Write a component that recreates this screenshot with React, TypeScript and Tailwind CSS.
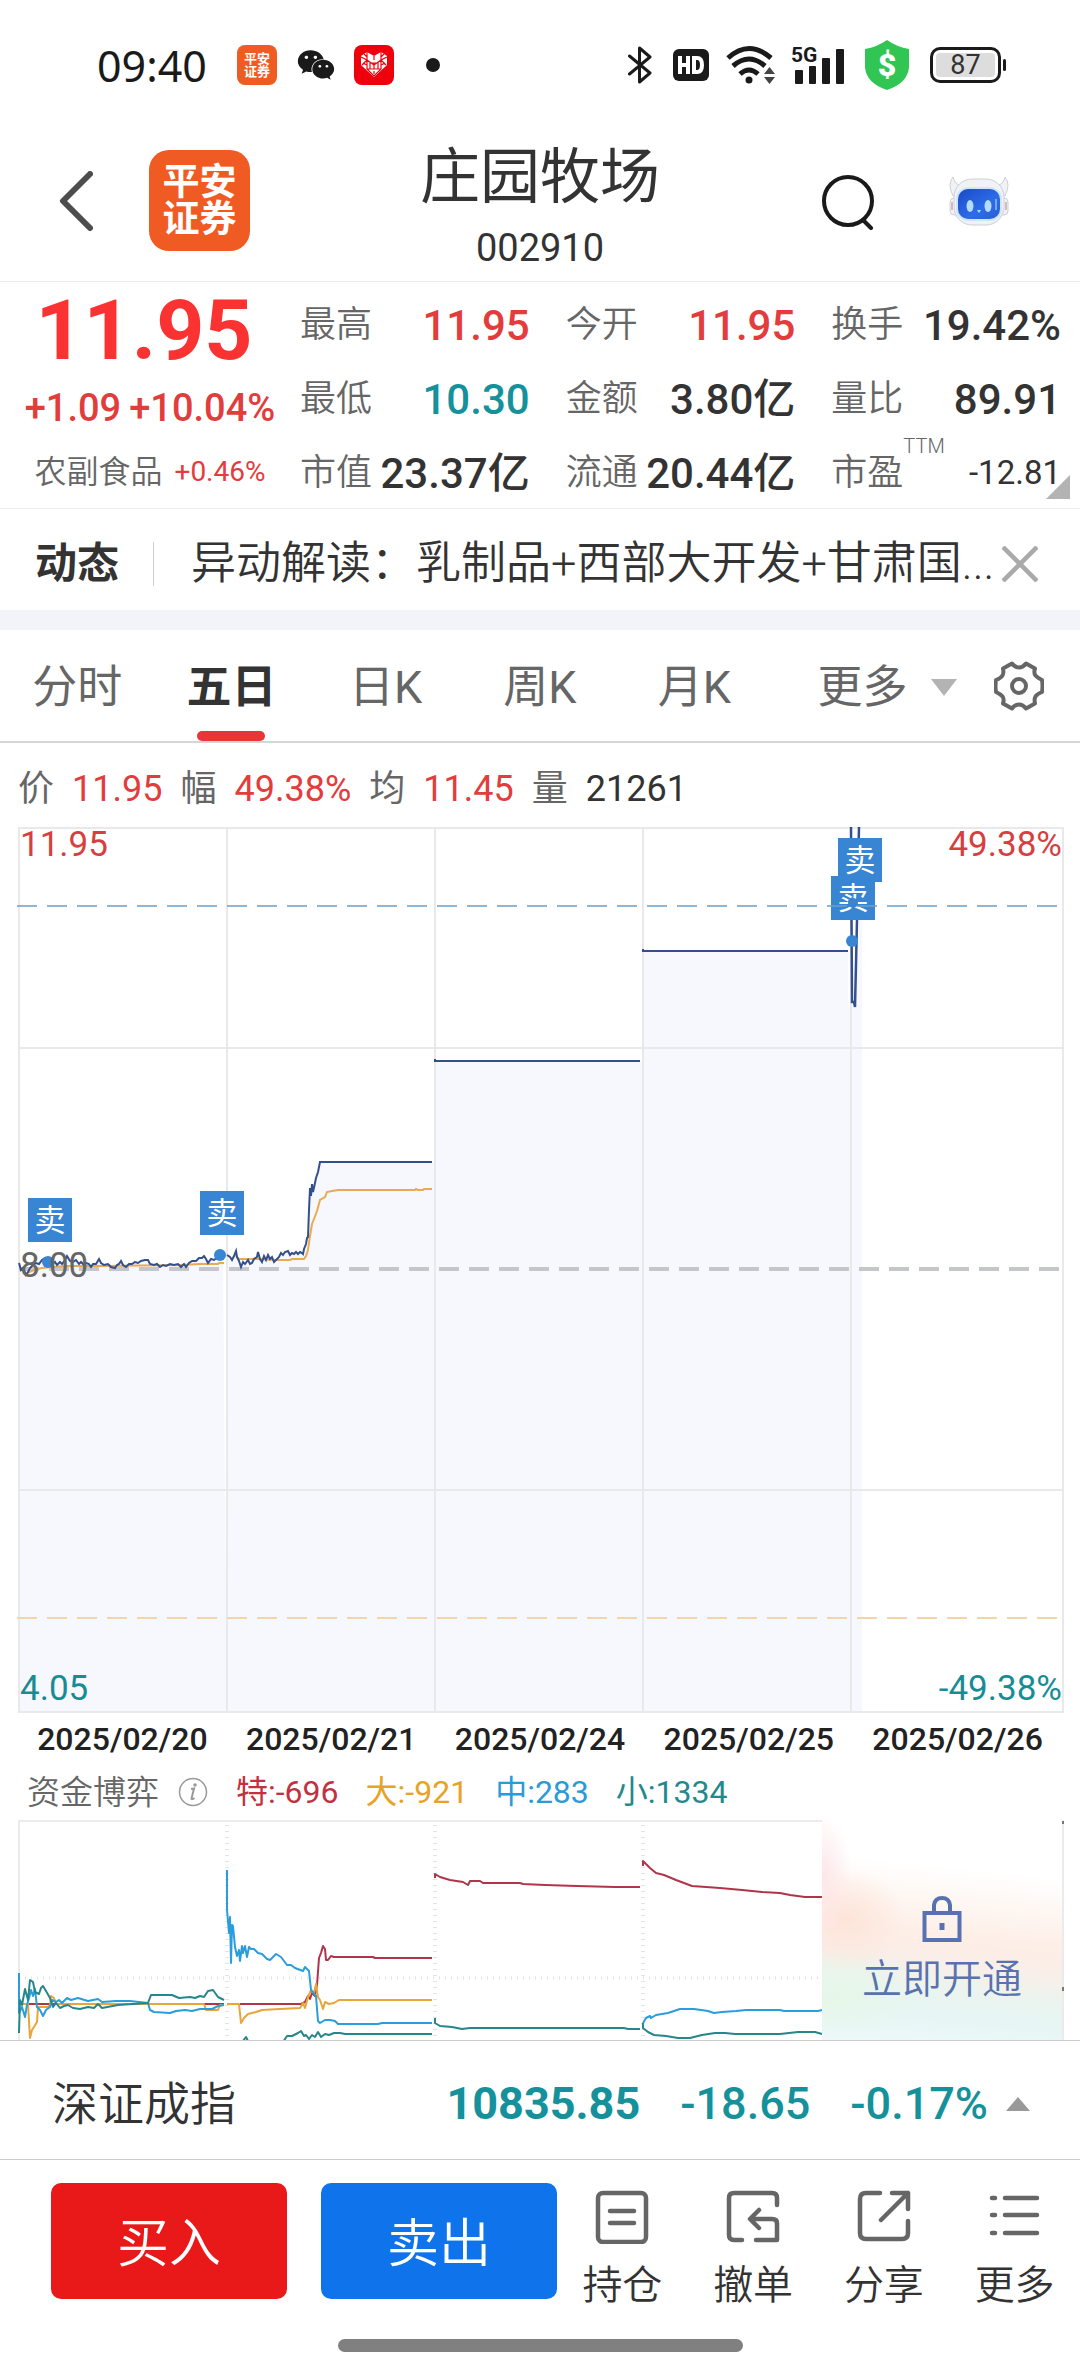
/**
 * App.tsx
 * 个股行情页：报价、五日分时图、资金博弈、底部交易栏
 */
import type { ReactNode } from 'react'
import { FaWeixin } from 'react-icons/fa'

const RED = 'text-[#e23c3c]'
const TEAL = 'text-[#14919a]'
const DARK = 'text-[#333333]'

type Quote = { label: string; value: string; color: string; sup?: string }

const QUOTES: Quote[] = [
  { label: '最高', value: '11.95', color: RED },
  { label: '今开', value: '11.95', color: RED },
  { label: '换手', value: '19.42%', color: DARK },
  { label: '最低', value: '10.30', color: TEAL },
  { label: '金额', value: '3.80亿', color: DARK },
  { label: '量比', value: '89.91', color: DARK },
  { label: '市值', value: '23.37亿', color: DARK },
  { label: '流通', value: '20.44亿', color: DARK },
  { label: '市盈', value: '-12.81', color: DARK, sup: 'TTM' },
]

const TABS = ['分时', '五日', '日K', '周K', '月K']
const DATES = ['2025/02/20', '2025/02/21', '2025/02/24', '2025/02/25', '2025/02/26']

const SUMMARY = [
  { label: '价', value: '11.95', color: RED },
  { label: '幅', value: '49.38%', color: RED },
  { label: '均', value: '11.45', color: RED },
  { label: '量', value: '21261', color: DARK },
]

const FLOWS = [
  { text: '特:-696', color: 'text-[#c2313f]' },
  { text: '大:-921', color: 'text-[#e8a325]' },
  { text: '中:283', color: 'text-[#2b9bd8]' },
  { text: '小:1334', color: 'text-[#22898c]' },
]

// 分时价格线，每个交易日一段
const DAY1 =
  '19,1263 21,1270 23,1268 26,1275 28,1272 30,1268 33,1265 36,1263 39,1264 42,1260 45,1258 48,1261 52,1264 55,1262 57,1265 60,1262 62,1264 65,1260 67,1256 70,1261 73,1262 76,1260 79,1264 81,1262 84,1265 86,1263 89,1264 91,1267 93,1264 96,1264 99,1259 101,1263 104,1265 108,1264 111,1267 115,1268 117,1265 119,1264 121,1261 123,1265 126,1267 129,1264 132,1264 135,1262 138,1263 141,1261 145,1260 148,1260 150,1264 154,1265 157,1264 160,1267 163,1265 166,1266 170,1264 174,1265 178,1264 181,1267 184,1264 186,1267 189,1263 192,1261 196,1261 199,1258 202,1258 204,1256 206,1259 208,1263 211,1259 214,1260 218,1257 221,1255 223,1257'
const DAY2 =
  '227,1255 230,1257 232,1260 234,1256 236,1251 237,1257 239,1261 241,1267 243,1262 245,1264 248,1260 250,1264 252,1263 254,1259 257,1257 258,1252 260,1259 262,1262 264,1256 266,1260 268,1255 270,1259 272,1257 274,1262 277,1259 279,1257 281,1253 283,1255 285,1252 288,1251 290,1255 292,1253 294,1254 296,1252 298,1254 300,1252 302,1253 303,1254 304,1249 306,1244 307,1238 308,1237 309,1210 310,1188 311,1196 312,1184 313,1192 315,1183 316,1178 318,1172 320,1162 432,1162'
const DAY5 = '851,827 852,1002 854,1002 855,1007 857,920 859,827'

const AVERAGE1 = '27,1273 34,1270 42,1268 52,1267 66,1266 100,1266 180,1265 200,1264 218,1264 219,1263 224,1263'
const AVERAGE2 =
  '236,1256 239,1259 260,1259 275,1260 290,1260 292,1259 304,1259 306,1256 308,1250 310,1236 312,1224 314,1219 317,1211 320,1200 325,1197 327,1192 332,1191 338,1190 415,1190 416,1189 418,1190 423,1190 424,1189 432,1189'

// 资金博弈曲线
const FLOW_LINES = [
  { color: '#b23448', points: '29,2004 224,2004' },
  {
    color: '#e8a53a',
    points:
      '21,2004 28,2004 30,2038 32,2030 34,2027 37,2022 38,2007 48,2007 50,2005 51,1996 54,1998 56,2004 204,2004 206,2010 218,2010 220,2005 224,2005',
  },
  {
    color: '#2a9ddc',
    points:
      '19,1973 19,2013 22,2007 25,2017 27,2005 29,1998 31,1990 33,1996 35,1989 37,2007 40,2010 43,2016 46,2010 50,2007 52,2000 56,2002 59,2000 62,2003 67,1998 71,2000 78,1998 88,2001 98,1999 102,2002 116,2001 130,2001 148,2003 150,2010 154,2012 170,2013 176,2011 185,2010 192,2011 200,2009 206,2009 212,2009 218,2006 224,2005',
  },
  {
    color: '#26868c',
    points:
      '19,2033 20,2000 22,2005 25,1989 28,2000 30,1980 33,1982 35,1992 39,1994 41,1988 43,1986 46,1991 50,1998 53,2007 56,2003 60,2008 64,2006 68,2005 73,2008 80,2009 88,2007 94,2008 98,2004 102,2008 118,2005 148,2003 151,1995 172,1995 179,1998 190,1997 195,1998 200,1996 204,1997 208,1991 213,1990 218,1997 224,2000',
  },
  {
    color: '#b23448',
    points:
      '240,2004 301,2004 305,2002 308,1996 310,1999 312,1993 315,1996 317,1985 319,1958 321,1953 323,1946 325,1949 326,1960 328,1960 331,1956 334,1957 373,1957 375,1958 432,1958',
  },
  {
    color: '#e8a53a',
    points:
      '227,2004 239,2004 241,2023 244,2018 248,2014 256,2012 262,2010 280,2009 300,2008 303,2003 305,2008 308,1997 311,1990 314,1993 316,1984 318,1997 320,2000 323,2009 325,2002 329,2004 334,2003 339,2000 432,2000',
  },
  {
    color: '#2a9ddc',
    points:
      '227,1870 227,1910 229,1933 230,1917 231,1963 232,1925 233,1926 235,1947 237,1956 239,1950 240,1961 242,1946 243,1953 245,1946 247,1957 249,1947 251,1949 254,1949 258,1953 262,1954 267,1959 270,1960 276,1954 281,1957 287,1965 291,1965 295,1968 303,1971 305,1967 307,1969 309,1971 311,1990 316,1996 318,2021 320,2023 325,2020 330,2020 335,2021 338,2024 378,2024 382,2023 432,2023',
  },
  {
    color: '#26868c',
    points:
      '283,2042 287,2036 292,2036 298,2033 301,2031 304,2036 306,2035 309,2039 312,2035 315,2037 318,2032 321,2037 325,2034 329,2035 334,2033 340,2033 345,2034 432,2034',
  },
  { color: '#26868c', points: '240,2041 243,2041 246,2037 248,2041' },
  {
    color: '#b23448',
    points:
      '435,1878 435,1874 440,1877 450,1880 463,1882 468,1885 470,1881 480,1881 483,1883 520,1883 523,1884 545,1885 577,1886 615,1887 640,1887',
  },
  { color: '#26868c', points: '435,2018 435,2023 440,2026 452,2027 462,2029 470,2028 624,2028 628,2029 640,2029' },
  {
    color: '#b23448',
    points:
      '643,1866 643,1861 650,1868 656,1873 664,1875 676,1880 692,1886 706,1887 720,1888 742,1890 762,1892 780,1893 790,1895 805,1897 822,1897',
  },
  {
    color: '#2a9ddc',
    points:
      '643,2023 646,2018 650,2016 651,2018 656,2015 668,2013 680,2009 694,2009 708,2011 714,2013 722,2012 736,2011 746,2010 780,2010 784,2011 818,2011 822,2010',
  },
  {
    color: '#26868c',
    points:
      '643,2023 643,2028 648,2032 654,2035 666,2036 678,2038 690,2038 702,2035 715,2033 725,2033 735,2034 780,2034 798,2032 815,2032 822,2034',
  },
]

const SELL_MARKS = [
  { x: 28, y: 1198 },
  { x: 200, y: 1191 },
  { x: 838, y: 838 },
  { x: 831, y: 876 },
]

const BrandLogo = ({ className }: { className: string }) => (
  <span
    className={`grid shrink-0 place-content-center bg-[#f05a23] text-center leading-none font-bold text-white ${className}`}
  >
    <span>平安</span>
    <span>证券</span>
  </span>
)

const StatusBar = () => (
  <div className="flex h-[130px] items-center justify-between pr-[74px] pl-[97px] text-[#1a1a1a]">
    <div className="flex items-center">
      <span className="font-['Noto_Sans',sans-serif] text-[43px] leading-none">09:40</span>
      <BrandLogo className="ml-[30px] size-10 rounded-lg text-[13px]" />
      <FaWeixin className="ml-5 size-[38px]" />
      <span className="ml-[19px] grid size-10 place-content-center rounded-lg bg-[#f0000c]">
        <svg viewBox="0 0 30 28" className="h-7 w-[30px]" aria-hidden="true">
          <path d="M15 26 2 14V5l6-4 7 4 7-4 6 4v9z" fill="#fff" />
          <path
            d="M15 5v4M8 1v8l7 5 7-5V1M2 6l6 3-5 5M28 6l-6 3 5 5M8 9v9l7 7 7-7V9M11 12h8v6h-8zM15 12v6M5 3l3 3M25 3l-3 3M8 14l-4-2M22 14l4-2M11 18l-3 0M19 18h3M15 20v3"
            fill="none"
            stroke="#f0000c"
            strokeWidth="1.2"
          />
        </svg>
      </span>
      <span className="ml-8 size-[14px] rounded-full bg-[#1a1a1a]" />
    </div>

    <div className="flex items-center">
      <svg viewBox="0 0 24 38" className="h-[38px] w-6" fill="none" stroke="#1a1a1a" strokeWidth="3" aria-hidden="true">
        <path d="M1.500 10 22 27 11.500 36V2L22 11 1.500 28" strokeLinejoin="round" strokeLinecap="round" />
      </svg>
      <span className="ml-[21px] grid h-8 w-9 place-content-center rounded-md bg-[#1a1a1a]">
        <svg viewBox="0 0 28 20" className="h-5 w-7" fill="none" stroke="#fff" strokeWidth="4" aria-hidden="true">
          <path d="M3 1v18M11 1v18M3 10h8M17 3v14h3q5 0 5-7t-5-7z" />
        </svg>
      </span>
      <svg viewBox="0 0 50 40" className="ml-[17px] h-10 w-[50px]" fill="none" stroke="#1a1a1a" strokeWidth="5" aria-hidden="true">
        <path d="M2 13Q23-6 45 13M7 21Q23 7 39 21M14 29Q23 21 32 29" />
        <circle cx="23" cy="35" r="3.500" fill="#1a1a1a" stroke="none" />
        <path d="M38 29l5.500-7 5.500 7zM38 32h11l-5.500 7z" fill="#444" stroke="none" />
      </svg>
      <span className="relative ml-[15px] block h-10 w-[53px]">
        <svg viewBox="0 0 53 40" className="h-10 w-[53px]" fill="#1a1a1a" aria-hidden="true">
          <rect x="4" y="25" width="8" height="14" rx="1" />
          <rect x="18" y="21" width="7" height="18" rx="1" />
          <rect x="31" y="13" width="8" height="26" rx="1" />
          <rect x="45" y="4" width="8" height="35" rx="1" />
        </svg>
        <span className="absolute top-0 left-0 text-[21px] leading-5 font-bold">5G</span>
      </span>
      <span className="relative ml-[20px] grid h-[50px] w-[46px] place-content-center text-[32px] leading-none font-black text-white">
        <svg viewBox="0 0 46 50" className="absolute inset-0 size-full" fill="#31c653" aria-hidden="true">
          <path d="M23 0 Q33 7 45 9V27Q44 43 23 50 2 43 1 27V9Q13 7 23 0z" />
        </svg>
        <span className="relative">$</span>
      </span>
      <span className="ml-5 flex h-9 w-[71px] items-center justify-center rounded-[10px] border-[3px] border-[#1a1a1a] p-[3px]">
        <span className="h-full w-full rounded bg-[#dddddd] text-center text-[27px] leading-6 text-[#333333]">87</span>
      </span>
      <span className="ml-[2px] h-3 w-[3px] rounded bg-[#1a1a1a]" />
    </div>
  </div>
)

const RobotIcon = () => (
  <svg viewBox="0 0 60 50" className="h-[50px] w-[60px]" aria-hidden="true">
    <defs>
      <linearGradient id="face" x1="0" y1="0" x2="1" y2="1">
        <stop offset="0" stopColor="#1c49c8" />
        <stop offset=".6" stopColor="#2c6ce8" />
        <stop offset="1" stopColor="#2a5fd0" />
      </linearGradient>
    </defs>
    <g fill="#f1f2f6" stroke="#cdd0d8" strokeWidth="1">
      <path d="M4 20Q-2 8 4 1 6 10 13 9L10 20zM56 20Q62 8 56 1 54 10 47 9L50 20z" />
      <rect x="1" y="22" width="9" height="17" rx="4" />
      <rect x="50" y="22" width="9" height="17" rx="4" />
      <rect x="5" y="3" width="50" height="46" rx="18" />
    </g>
    <path d="M3 26v8M57 26v8" stroke="#d8b9bd" strokeWidth="2" />
    <rect x="7" y="11" width="46" height="34" rx="12" fill="#cfe6fb" />
    <rect x="9" y="13" width="42" height="30" rx="10" fill="url(#face)" />
    <ellipse cx="21" cy="30" rx="3.500" ry="6" fill="#b5dbff" />
    <ellipse cx="39" cy="30" rx="3.500" ry="6" fill="#b5dbff" />
    <path d="M28 34h4l-2 3z" fill="#b5dbff" />
    <path d="M47 23v11" stroke="#8fb8f5" strokeWidth="1.500" />
  </svg>
)

const Header = () => (
  <header className="flex h-[151px] items-center px-[59px]">
    <div className="flex flex-1 items-center gap-[56px] pb-[10px]">
      <button aria-label="返回">
        <svg viewBox="0 0 34 60" className="h-[60px] w-[34px]" fill="none" stroke="#4d4d4d" strokeWidth="6" aria-hidden="true">
          <path d="M31 3 4 30l27 27" strokeLinecap="round" strokeLinejoin="round" />
        </svg>
      </button>
      <BrandLogo className="size-[101px] rounded-[20px] text-[37px]" />
    </div>
    <div className="flex flex-col items-center pt-2">
      <h1 className="text-[60px] leading-[76px] text-[#333333]">庄园牧场</h1>
      <span className="text-[38px] leading-[64px] text-[#333333]">002910</span>
    </div>
    <div className="flex flex-1 items-center justify-end gap-[74px] pb-[10px]">
      <button aria-label="搜索">
        <svg viewBox="0 0 54 58" className="h-[58px] w-[54px]" fill="none" stroke="#1a1a1a" strokeWidth="4" aria-hidden="true">
          <circle cx="27" cy="29" r="24" />
          <path d="m42 48 8 8" strokeLinecap="round" />
        </svg>
      </button>
      <button aria-label="智能助手" className="mr-3">
        <RobotIcon />
      </button>
    </div>
  </header>
)

const QuotePanel = () => (
  <section className="relative flex border-y border-[#ebebeb] pt-1 pr-[19px]">
    <div className="flex w-[300px] shrink-0 flex-col items-center text-[#e23c3c]">
      <span className="pr-3 text-[84px] leading-[90px] font-bold text-[#fa3232]">11.95</span>
      <span className="flex gap-2 text-[38px] leading-[64px] font-medium">
        <span>+1.09</span>
        <span>+10.04%</span>
      </span>
      <a href="#sector" className="flex items-center gap-3 text-[28px] leading-[64px]">
        <span className="text-[32px] font-[350] text-[#666666]">农副食品</span>
        +0.46%
      </a>
    </div>
    <dl className="grid flex-1 grid-cols-3 gap-x-9">
      {QUOTES.map((q) => (
        <div key={q.label} className="flex h-[74px] items-center justify-between pt-1 whitespace-nowrap">
          <dt className="relative text-[36px] font-[350] text-[#666666]">
            {q.label}
            {q.sup && <span className="absolute -top-3 left-full text-xl leading-6">{q.sup}</span>}
          </dt>
          <dd className={`${q.color} ${q.sup ? 'text-[33px]' : 'text-[42px] font-medium'}`}>{q.value}</dd>
        </div>
      ))}
    </dl>
    <svg viewBox="0 0 24 24" className="absolute right-[10px] bottom-[9px] size-6" fill="#b3b3b3" aria-hidden="true">
      <path d="M24 0v24H0z" />
    </svg>
  </section>
)

const NewsBar = () => (
  <div className="flex h-[101px] items-center pt-2 pr-[42px] pl-[35px] text-[#333333]">
    <strong className="shrink-0 text-[42px]">动态</strong>
    <span className="mr-[37px] ml-[34px] h-11 w-px shrink-0 bg-[#cccccc]" />
    <a href="#news" className="shrink-0 text-[45px] leading-[60px] font-[350] whitespace-nowrap">
      异动解读：乳制品+西部大开发+甘肃国...
    </a>
    <button aria-label="关闭" className="ml-auto">
      <svg viewBox="0 0 36 36" className="size-9" stroke="#aaaaaa" strokeWidth="4.500" aria-hidden="true">
        <path d="m1 1 34 34M35 1 1 35" />
      </svg>
    </button>
  </div>
)

const Tabs = () => (
  <nav className="flex h-[113px] items-stretch border-b-2 border-[#d6d6d6] text-[45px] text-[#666666]">
    {TABS.map((tab) => {
      const active = tab === '五日'
      return (
        <button
          key={tab}
          className={`relative w-1/7 pt-1 ${active ? 'font-bold text-[#333333]' : ''}`}
        >
          {tab}
          {active && (
            <span className="absolute bottom-0 left-1/2 h-[10px] w-[68px] -translate-x-1/2 rounded-full bg-[#e83535]" />
          )}
        </button>
      )
    })}
    <button className="ml-[46px] flex items-center gap-6 pt-1 whitespace-nowrap">
      更多
      <svg viewBox="0 0 26 17" className="h-[17px] w-[26px]" fill="#b3b3b3" aria-hidden="true">
        <path d="M0 0h26L13 17z" />
      </svg>
    </button>
    <button aria-label="图表设置" className="mr-9 ml-auto">
      <svg viewBox="0 0 50 50" className="size-[50px]" fill="none" stroke="#666" strokeWidth="4" aria-hidden="true">
        <path
          d="M18 2.500Q21 6.500 25 6.500T32 2.500L41 7.500Q39.500 12 41.500 14.500T48 19Q49 25 48 31 43 33 41.500 35.500T41 42.500L32 47.500Q29 43.500 25 43.500T18 47.500L9 42.500Q10.500 38 8.500 35.500T2 31Q1 25 2 19 7 17 8.500 14.500T9 7.500z"
          strokeLinejoin="round"
        />
        <circle cx="25" cy="25" r="7" />
      </svg>
    </button>
  </nav>
)

const Summary = () => (
  <div className="flex h-[84px] items-center gap-[18px] pt-2 pl-[18px] text-[36px]">
    {SUMMARY.map((s) => (
      <span key={s.label} className="flex gap-[18px]">
        <span className="text-[#666666]">{s.label}</span>
        <span className={s.color}>{s.value}</span>
      </span>
    ))}
  </div>
)

const PriceChart = () => (
  <div className="relative text-[35px] leading-9">
    <svg viewBox="0 827 1080 886" className="block w-full" fill="none" aria-label="五日走势">
      <g fill="#f7f8fd">
        <polygon points={`19,1712 ${DAY1} 227,1712`} />
        <polygon points={`227,1712 ${DAY2} 435,1162 435,1712`} />
        <path d="M435 1061H643V1712H435zM643 951H848V1712H643zM848 1007h7l4-87h3V1712H848z" />
      </g>
      <g stroke="#e9e9ec" strokeWidth="2">
        <path d="M19 828H1063V1712H19zM19 1048H1063M19 1490H1063M227 828V1712M435 828V1712M643 828V1712M851 828V1712" />
      </g>
      <path d="M19 1269H1060" stroke="#c4c6ca" strokeWidth="4" strokeDasharray="20 10" />
      <path d="M17 1618H1060" stroke="#f2d6a8" strokeWidth="2" strokeDasharray="20 10" />
      <g stroke="#eaaa52" strokeWidth="2">
        <polyline points={AVERAGE1} />
        <polyline points={AVERAGE2} />
      </g>
      <g stroke="#34508c" strokeWidth="2">
        <polyline points={DAY1} />
        <polyline points={DAY2} />
        <path d="M435 1059v2H640M643 949v2H848" />
        <polyline points={DAY5} strokeWidth="2.500" />
      </g>
      <g fill="#3785d3">
        <circle cx="48" cy="1262" r="6" />
        <circle cx="220" cy="1255" r="6" />
        <circle cx="852" cy="941" r="6" />
      </g>
      {SELL_MARKS.map((m) => (
        <g key={m.x}>
          <rect x={m.x} y={m.y} width="44" height="44" fill="#3785d3" />
          <text x={m.x + 22} y={m.y + 33} textAnchor="middle" fontSize="31" fill="#fff">
            卖
          </text>
        </g>
      ))}
      <circle cx="853" cy="903" r="5" fill="#3785d3" />
      <path d="M17 906H1058" stroke="#6f9fc4" strokeWidth="1.500" strokeDasharray="20 10" />
    </svg>
    <span className="absolute top-0 left-5 text-[#d63f3f]">11.95</span>
    <span className="absolute top-0 right-[18px] text-[#d63f3f]">49.38%</span>
    <span className="absolute top-[47.5%] left-5 text-[#666666]">8.00</span>
    <span className="absolute bottom-[6px] left-5 text-[#188c94]">4.05</span>
    <span className="absolute right-[18px] bottom-[6px] text-[#188c94]">-49.38%</span>
  </div>
)

const FlowChart = () => (
  <section className="relative">
    <div className="flex h-[56px] items-center pl-[27px] text-[32px] leading-none">
      <h2 className="text-[33px] font-[350] text-[#666666]">资金博弈</h2>
      <button aria-label="说明" className="ml-[19px]">
        <svg viewBox="0 0 30 30" className="size-[30px]" fill="none" stroke="#999" strokeWidth="1.500" aria-hidden="true">
          <circle cx="15" cy="15" r="13.500" />
          <path d="m13 12 3-.5-2.500 10q0 1.500 3-.5" strokeWidth="2" />
          <circle cx="17" cy="8" r="1" fill="#999" />
        </svg>
      </button>
      <div className="ml-[28px] flex gap-[27px]">
        {FLOWS.map((f) => (
          <span key={f.text} className={f.color}>
            {f.text}
          </span>
        ))}
      </div>
    </div>
    <svg viewBox="0 1820 1080 220" className="block w-full" fill="none" aria-label="资金博弈走势">
      <path d="M19 2040V1821H1063V2040" stroke="#ebebed" strokeWidth="2" />
      <g stroke="#e4e4e8" strokeDasharray="1 5">
        <path d="M227 1825V2040M435 1825V2040M643 1825V2040" strokeWidth="4" />
        <path d="M25 1978H822" strokeWidth="3" />
      </g>
      <g strokeWidth="2" strokeLinejoin="round">
        {FLOW_LINES.map((l) => (
          <polyline key={l.points} points={l.points} stroke={l.color} />
        ))}
      </g>
      <path d="M1063 1821v3M1063 1987v4" stroke="#777" strokeWidth="2" />
    </svg>
    {/* 未开通时遮住最后一段 */}
    <a
      href="#unlock"
      className="absolute inset-y-0 right-[18px] w-[240px] overflow-hidden bg-white text-[40px] leading-[52px] font-[350] text-[#5872b0]"
    >
      <span className="absolute inset-0 bg-[linear-gradient(186deg,#ffffff_38%,#fef8f4_48%,#fdeee6_62%,#f9eee8_70%,#eaf4ef_80%,#e6f6f4_88%,#eff8fd_100%)]" />
      <span className="absolute inset-0 bg-[radial-gradient(30px_60px_at_0%_40%,#fde6e8,transparent),radial-gradient(60px_50px_at_10%_56%,#fde4d9,transparent),radial-gradient(90px_50px_at_5%_84%,#e6f7e8,transparent)]" />
      <span className="relative flex h-full flex-col items-center justify-end gap-3 pb-[34px]">
        <svg viewBox="0 0 40 46" className="h-[46px] w-10" fill="none" stroke="#5872b0" strokeWidth="4" aria-hidden="true">
          <path d="M2.500 17h35v27h-35zM12 17V9q1-7 8-7t8 7v8" />
          <path d="M20 27v7" strokeWidth="5" />
        </svg>
        立即开通
      </span>
    </a>
  </section>
)

const IndexBar = () => (
  <div className="flex h-[120px] items-center border-y border-[#cccccc] pt-2 pr-[50px] pl-[52px] text-[45px]">
    <span className="text-[46px] font-[350] text-[#333333]">深证成指</span>
    <span className="ml-auto flex items-center gap-10 font-medium text-[#14919a]">
      <span className="font-bold">10835.85</span>
      <span>-18.65</span>
      <span>-0.17%</span>
    </span>
    <svg viewBox="0 0 24 14" className="ml-[18px] h-[14px] w-6" fill="#999999" aria-hidden="true">
      <path d="M0 14 12 0l12 14z" />
    </svg>
  </div>
)

const Action = ({ label, children }: { label: string; children: ReactNode }) => (
  <button className="flex flex-1 flex-col items-center gap-4 text-[40px] leading-[52px] font-[350] text-[#333333]">
    <svg
      viewBox="0 0 54 54"
      className="size-[54px]"
      fill="none"
      stroke="#666666"
      strokeWidth="4.500"
      strokeLinecap="round"
      strokeLinejoin="round"
      aria-hidden="true"
    >
      {children}
    </svg>
    {label}
  </button>
)

const TradeBar = () => (
  <footer className="pt-[23px] pb-6">
    <div className="flex items-start pl-[51px]">
      <button className="h-[116px] w-[236px] rounded-[10px] bg-[#e91919] pt-2 text-[52px] font-[350] text-white">
        买入
      </button>
      <button className="ml-[34px] h-[116px] w-[236px] rounded-[10px] bg-[#0f74eb] pt-2 text-[52px] font-[350] text-white">
        卖出
      </button>
      <div className="flex flex-1 pt-[7px]">
        <Action label="持仓">
          <rect x="3" y="3" width="48" height="49" rx="5" />
          <path d="M15 21h24M15 33h24" />
        </Action>
        <Action label="撤单">
          <path d="M51 15V8q0-5-5-5H8Q3 3 3 8v37q0 5 5 5h8M30 50h21V33q0-4-5-4H25M33 20l-9 9 9 9" />
        </Action>
        <Action label="分享">
          <path d="M23 3H9Q3 3 3 9v34q0 6 6 6h36q6 0 6-6V31M35 3h16v16M51 3 24 30" />
        </Action>
        <Action label="更多">
          <path d="M4 8h3M17 8h32M4 25h3M17 25h32M4 43h3M17 43h32" />
        </Action>
      </div>
    </div>
    <div className="mx-auto mt-[27px] h-[13px] w-[405px] rounded-full bg-[#808080]" />
  </footer>
)

const App = () => (
  <main className="w-full bg-white font-['Roboto','Noto_Sans_CJK_SC',sans-serif]">
    <StatusBar />
    <Header />
    <QuotePanel />
    <NewsBar />
    <div className="h-5 bg-[#f3f4f9]" />
    <Tabs />
    <Summary />
    <PriceChart />
    <div className="flex h-[51px] items-center px-[18px] text-[32px] leading-none font-medium text-[#222222]">
      {DATES.map((d) => (
        <time key={d} className="flex-1 text-center">
          {d}
        </time>
      ))}
    </div>
    <FlowChart />
    <IndexBar />
    <TradeBar />
  </main>
)

export default App
